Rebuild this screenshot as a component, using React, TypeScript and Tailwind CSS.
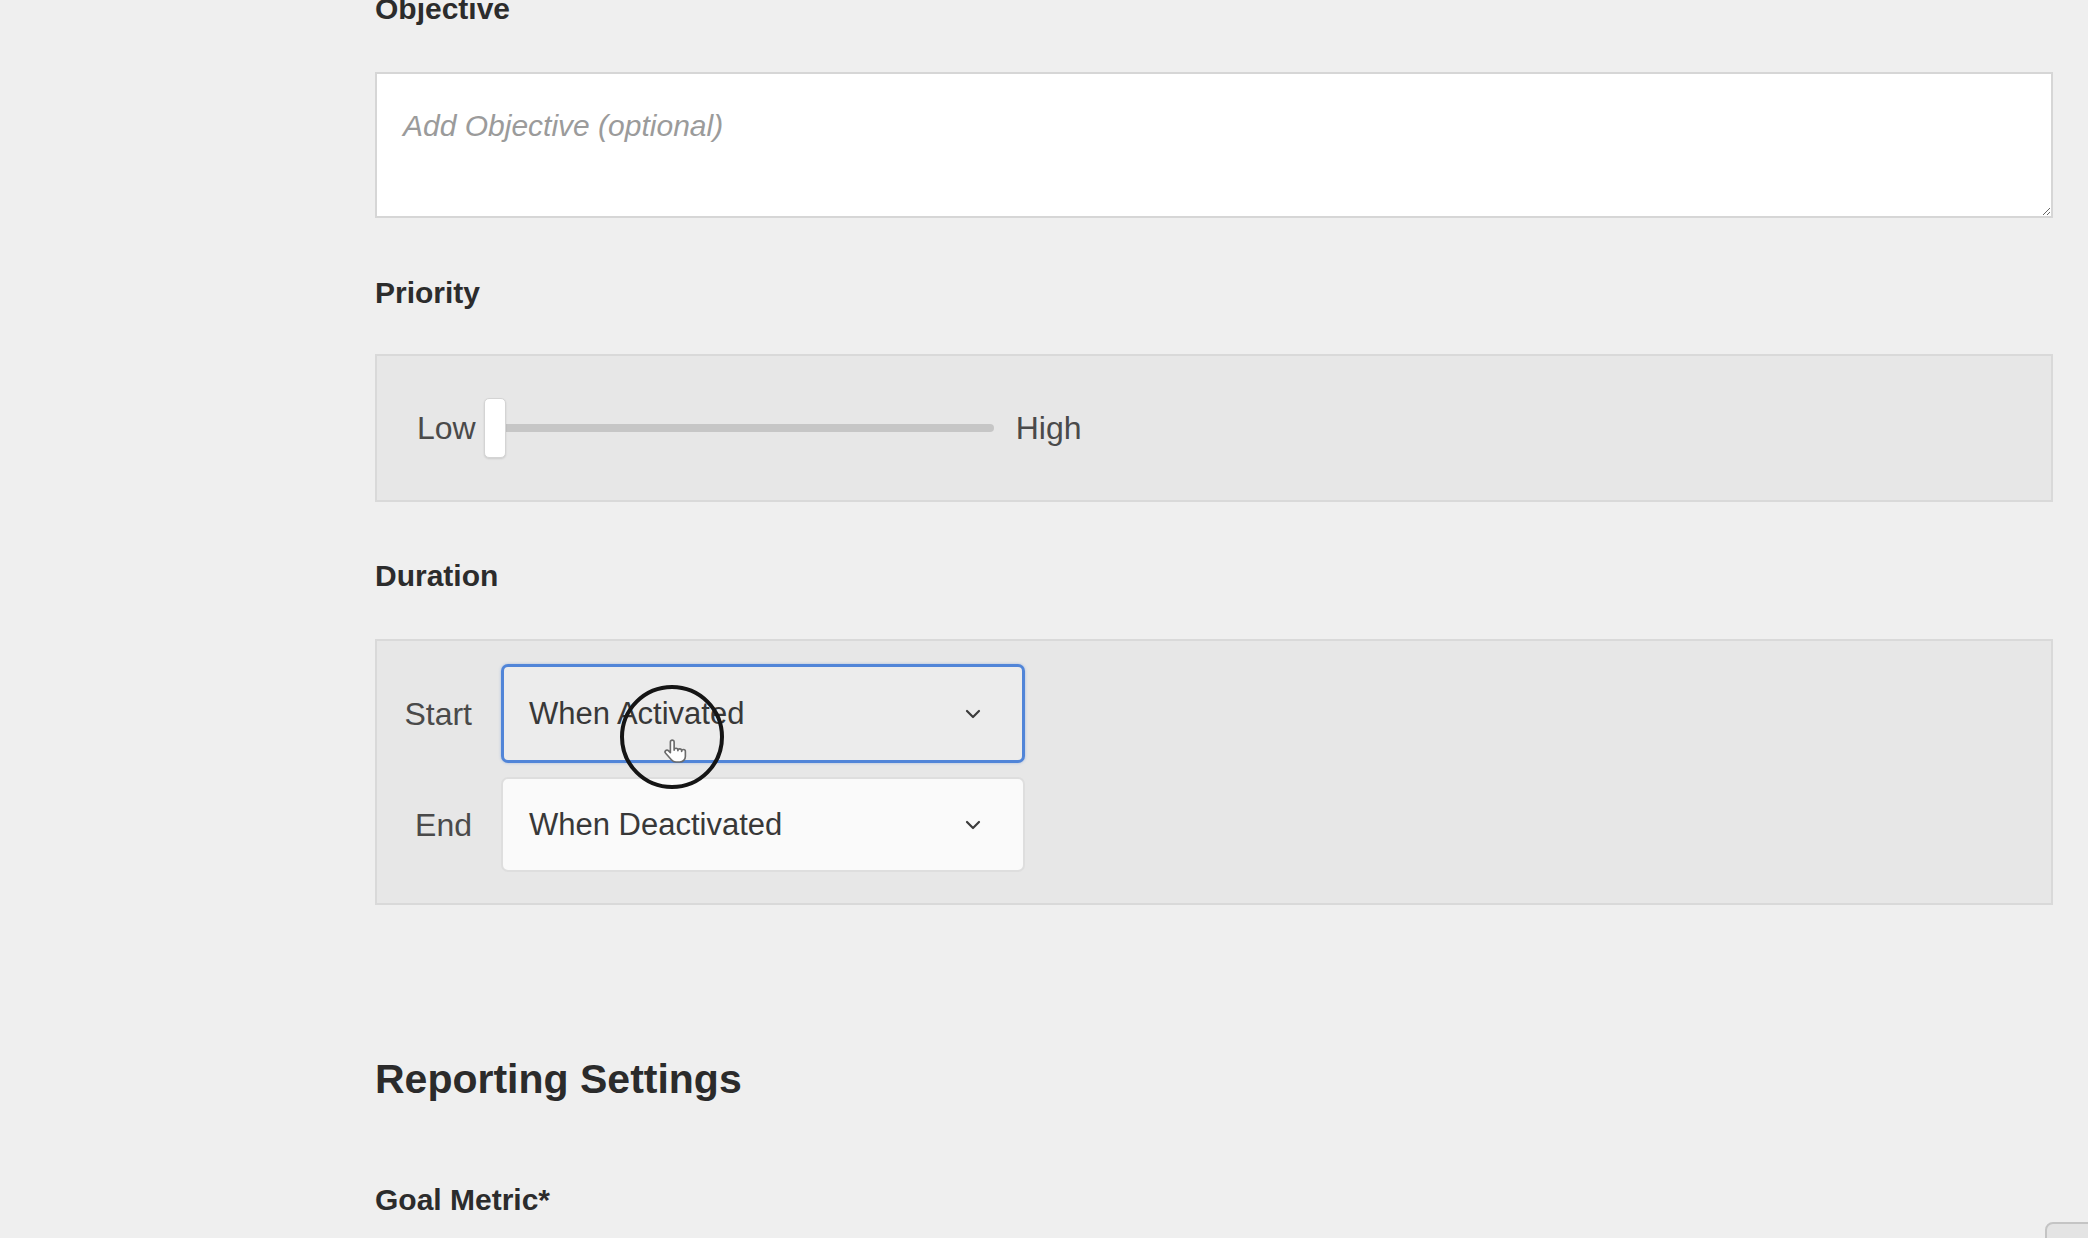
import React from "react";

function Chevron() {
  return (
    <svg width="16" height="10" viewBox="0 0 16 10" fill="none">
      <path d="M2 2 L8 8 L14 2" stroke="#3c3c3c" strokeWidth="2.2" strokeLinecap="round" strokeLinejoin="round" />
    </svg>
  );
}

function HandCursor() {
  return (
    <svg width="30" height="30" viewBox="0 0 24 24">
      <path
        d="M9 2.5c-.8 0-1.5.7-1.5 1.5v8.5l-1.6-1.6c-.6-.6-1.6-.6-2.2 0-.6.6-.6 1.5 0 2.1l4.6 5.2c.9 1 2.2 1.8 3.7 1.8h3c2.5 0 4.5-2 4.5-4.5v-4c0-.8-.7-1.5-1.5-1.5s-1.5.7-1.5 1.5v-.5c0-.8-.7-1.5-1.5-1.5s-1.5.7-1.5 1.5v-.5c0-.8-.7-1.5-1.5-1.5s-1.5.7-1.5 1.5V4c0-.8-.7-1.5-1.5-1.5z"
        fill="#ffffff"
        stroke="#6b6b6b"
        strokeWidth="1.3"
        strokeLinejoin="round"
      />
    </svg>
  );
}

export default function App() {
  return (
    <div className="relative h-[1238px] w-full overflow-hidden bg-[#efefef] font-['Liberation_Sans',Arial,sans-serif]">
      <div className="ml-[375px] flex w-[1678px] flex-col">
        <div className="-mt-[6px] h-[30px] text-[30px] font-bold leading-[30px] text-[#2c2c2c]">Objective</div>

        <textarea
          placeholder="Add Objective (optional)"
          className="mt-[48px] h-[146px] w-full border-2 border-[#d6d6d6] bg-white pl-[26px] pr-[20px] pt-[34px] text-[30px] italic leading-[36px] text-[#333] outline-none placeholder:text-[#9b9b9b]"
        />

        <div className="mt-[60px] h-[30px] text-[30px] font-bold leading-[30px] text-[#2c2c2c]">Priority</div>

        <div className="mt-[46px] flex h-[148px] items-center border-2 border-[#d9d9d9] bg-[#e7e7e7] pl-[40px]">
          <span className="text-[32px] leading-[36px] text-[#4a4a4a]">Low</span>
          <div className="relative ml-[8px] flex h-[60px] w-[510px] items-center">
            <div className="h-[8px] w-full rounded-full bg-[#c6c6c6]" />
            <div className="absolute left-0 top-0 h-[60px] w-[22px] rounded-[5px] border border-[#d4d4d4] bg-white shadow-[0_1px_2px_rgba(0,0,0,0.12)]" />
          </div>
          <span className="ml-[22px] text-[32px] leading-[36px] text-[#4a4a4a]">High</span>
        </div>

        <div className="mt-[59px] h-[30px] text-[30px] font-bold leading-[30px] text-[#2c2c2c]">Duration</div>

        <div className="mt-[48px] flex h-[266px] flex-col gap-[14px] border-2 border-[#d9d9d9] bg-[#e7e7e7] pl-[22px] pt-[23px]">
          <div className="flex items-center">
            <span className="w-[73px] text-right text-[32px] leading-[36px] text-[#4a4a4a]">Start</span>
            <div className="ml-[29px] flex h-[99px] w-[524px] items-center justify-between rounded-[7px] border-[3px] border-[#5185d8] bg-[#ececec] pl-[25px] pr-[41px] shadow-[0_0_3px_rgba(84,135,216,0.45)]">
              <span className="text-[31px] leading-[36px] text-[#383838]">When Activated</span>
              <Chevron />
            </div>
          </div>
          <div className="flex items-center">
            <span className="w-[73px] text-right text-[32px] leading-[36px] text-[#4a4a4a]">End</span>
            <div className="ml-[29px] flex h-[95px] w-[524px] items-center justify-between rounded-[7px] border-2 border-[#dedede] bg-[#fafafa] pl-[26px] pr-[42px]">
              <span className="text-[31px] leading-[36px] text-[#383838]">When Deactivated</span>
              <Chevron />
            </div>
          </div>
        </div>

        <div className="mt-[154px] h-[41px] text-[41px] font-bold leading-[41px] text-[#2b2b2b]">Reporting Settings</div>

        <div className="mt-[85px] h-[30px] text-[30px] font-bold leading-[30px] text-[#2c2c2c]">Goal Metric*</div>
      </div>

      {/* partially visible control at bottom right */}
      <div className="absolute left-[2045px] top-[1222px] h-[40px] w-[80px] rounded-[8px] border-2 border-[#c4c4c4] bg-[#e4e4e4]" />

      {/* click indicator overlay */}
      <div className="pointer-events-none absolute left-[620px] top-[685px] h-[104px] w-[104px] rounded-full border-[4px] border-[#151515]" />
      <div className="pointer-events-none absolute left-[661px] top-[737px]">
        <HandCursor />
      </div>
    </div>
  );
}
